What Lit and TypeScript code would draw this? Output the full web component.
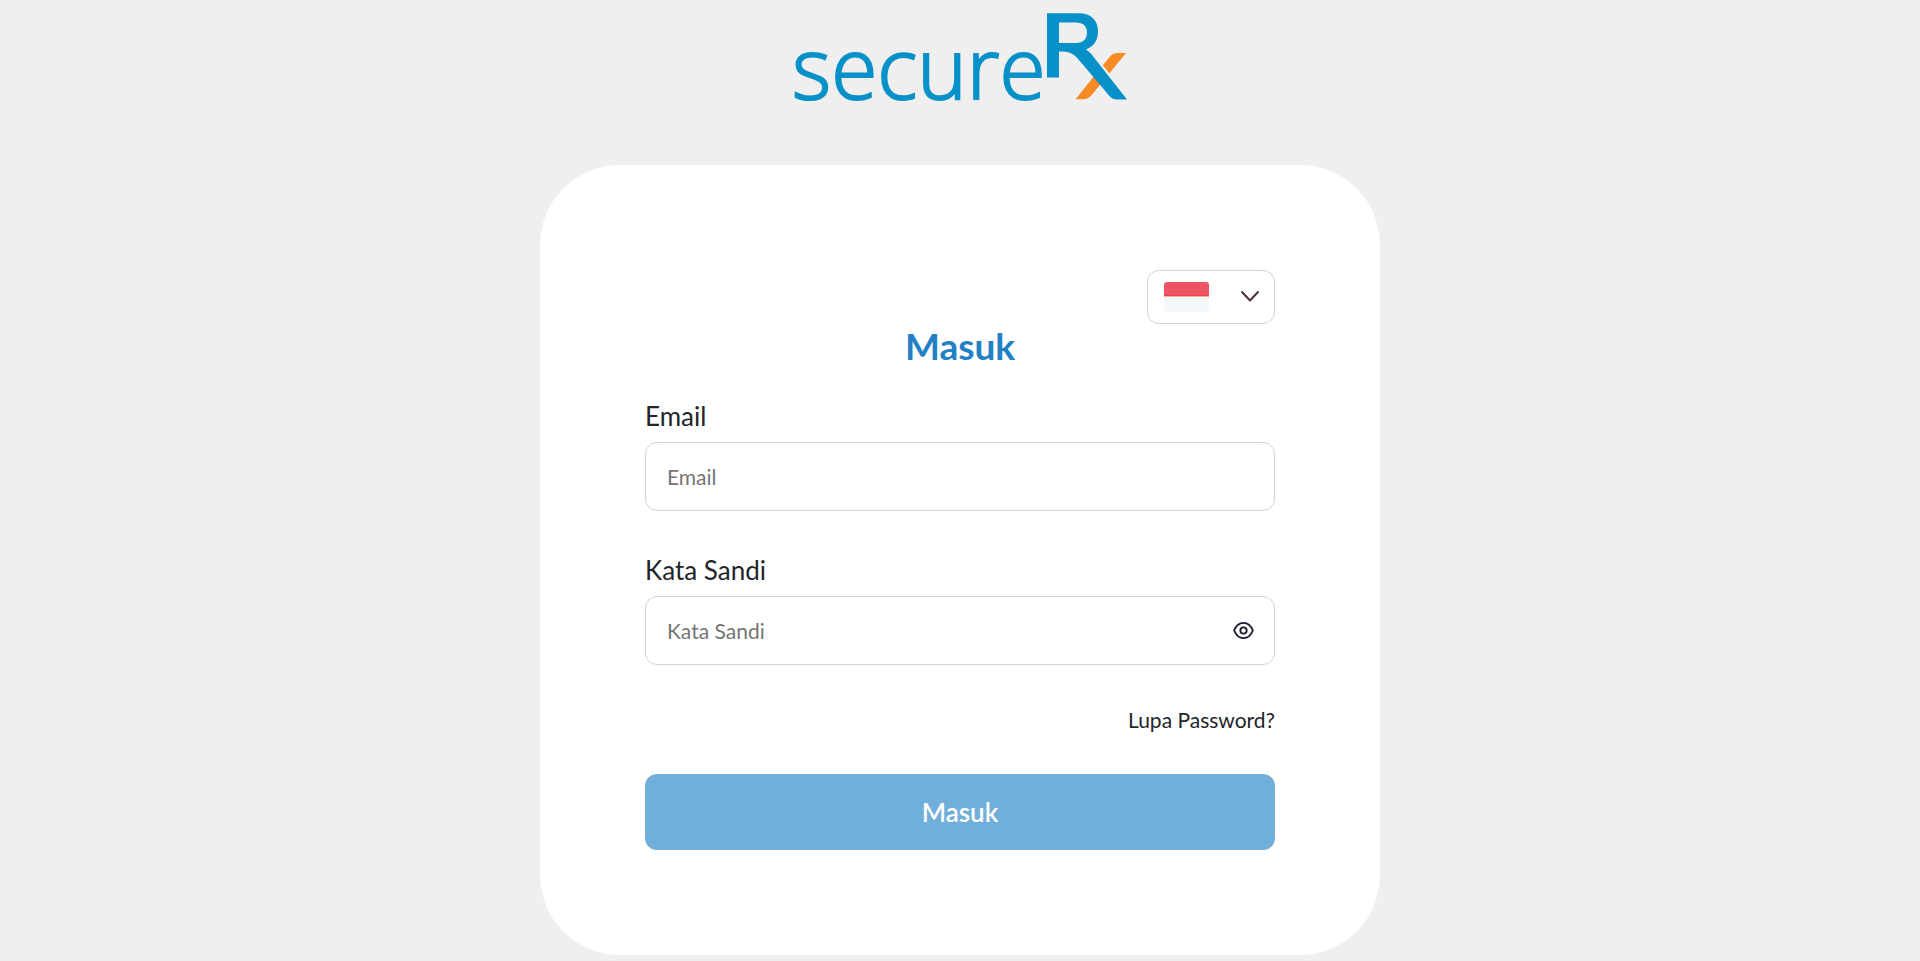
import { LitElement, html, css } from "lit";
import { customElement, state } from "lit/decorators.js";

@customElement("brand-logo")
class BrandLogo extends LitElement {
  static styles = css`
    :host {
      display: block;
    }
    .logo {
      display: block;
      width: 360px;
      max-width: 100%;
      height: auto;
    }
    .word {
      font-family: "Open Sans", "Noto Sans", sans-serif;
      font-size: 84px;
      font-weight: 300;
      fill: #0891c9;
      stroke: #0891c9;
      stroke-width: 2px;
    }
    .blue {
      fill: #0891c9;
    }
    .orange {
      fill: #f68b25;
    }
    .gap {
      fill: #efefef;
    }
  `;

  render() {
    return html`
      <svg class="logo" viewBox="0 0 360 130" role="img" aria-label="secureRx">
        <text class="word" x="12" y="99">secure</text>
        <path
          class="orange"
          d="M346 53h-8q-5 0-8.500 4L295.500 99.300H303q5 0 8.500-4z"
        />
        <path class="gap" d="M317 58l12.500 15.500-5 5-14-17z" />
        <path
          class="blue"
          fill-rule="evenodd"
          d="M267 13.300h32c12 0 19 7 19 18 0 9-4 15-12 18.200 3 2 5 4 8 8l33 42h-10q-5 0-8-4L299 60c-4-5-9-8.500-16-8.500h-4V77.500h-12zM279 22.500v20.500h17c7 0 11-4 11-10.500s-4-10-11-10z"
        />
      </svg>
    `;
  }
}

@customElement("app-root")
class AppRoot extends LitElement {
  static styles = css`
    :host {
      display: block;
      min-height: 100vh;
      background: #efefef;
      color: #212529;
      font-family: Lato, "Open Sans", sans-serif;
      font-size: 21px;
      line-height: 26px;
    }
    *,
    *::before,
    *::after {
      box-sizing: border-box;
    }
    .page {
      display: flex;
      flex-direction: column;
      align-items: center;
      gap: 35px;
      padding-bottom: 6px;
    }
    .card {
      display: flex;
      flex-direction: column;
      width: 100%;
      max-width: 840px;
      padding: 105px;
      border-radius: 80px;
      background: #ffffff;
    }
    .language {
      display: grid;
      align-self: flex-end;
      align-items: center;
      width: 128px;
      height: 54px;
    }
    .language > * {
      grid-area: 1 / 1;
    }
    .language select {
      width: 100%;
      height: 100%;
      border: 1px solid #ced4da;
      border-radius: 12px;
      background: #ffffff;
      color: transparent;
      font: inherit;
      appearance: none;
      cursor: pointer;
    }
    .language option {
      color: #212529;
    }
    .marks {
      display: flex;
      justify-content: space-between;
      align-items: center;
      padding: 0 16px 0 17px;
      pointer-events: none;
    }
    .flag {
      width: 45px;
      height: 30px;
    }
    .chevron {
      width: 18px;
      height: 18px;
    }
    h1 {
      margin: 0 0 31px;
      color: #2280c4;
      font-size: 37px;
      font-weight: 700;
      line-height: 44px;
      text-align: center;
    }
    form {
      display: flex;
      flex-direction: column;
    }
    .field {
      display: flex;
      flex-direction: column;
      gap: 9px;
      margin-bottom: 42px;
    }
    label {
      font-size: 26px;
      line-height: 34px;
    }
    .control {
      display: flex;
      align-items: center;
      height: 69px;
      padding: 0 20px 0 21px;
      border: 1px solid #ced4da;
      border-radius: 12px;
      background: #ffffff;
    }
    .control:focus-within {
      border-color: #2280c4;
    }
    .control input {
      flex: 1;
      min-width: 0;
      height: 100%;
      padding: 0;
      border: 0;
      outline: 0;
      background: transparent;
      color: inherit;
      font: inherit;
    }
    .control input::placeholder {
      color: #757575;
      opacity: 1;
    }
    .reveal {
      display: flex;
      padding: 0;
      border: 0;
      background: none;
      color: #1b1b33;
      cursor: pointer;
    }
    .reveal svg {
      width: 21px;
      height: 21px;
    }
    .forgot {
      align-self: flex-end;
      margin-bottom: 41px;
      color: #212529;
      text-decoration: none;
    }
    .submit {
      height: 76px;
      border: 0;
      border-radius: 12px;
      background: #71afdb;
      color: #ffffff;
      font: inherit;
      font-size: 26px;
      font-weight: 600;
    }
  `;

  @state() private showPassword = false;

  private togglePassword() {
    this.showPassword = !this.showPassword;
  }

  render() {
    return html`
      <div class="page">
        <brand-logo></brand-logo>
        <main class="card">
          <div class="language">
            <select aria-label="Bahasa">
              <option value="id">Indonesia</option>
              <option value="en">English</option>
            </select>
            <div class="marks" aria-hidden="true">
              <svg class="flag" viewBox="0 0 45 30">
                <path fill="#f4f8fa" d="M0 15h45v12q0 3-3 3H3q-3 0-3-3z" />
                <path fill="#ed5565" d="M0 15V3q0-3 3-3h39q3 0 3 3v12z" />
                <path fill="#ef3d55" d="M0 13h45v1H0z" />
                <path fill="#f3b394" d="M0 14h45v1H0z" />
              </svg>
              <svg class="chevron" viewBox="0 0 18 18">
                <path
                  d="M1 4l8 8.500L17 4"
                  fill="none"
                  stroke="#4b3038"
                  stroke-width="2"
                  stroke-linecap="round"
                  stroke-linejoin="round"
                />
              </svg>
            </div>
          </div>
          <h1>Masuk</h1>
          <form @submit=${(e: Event) => e.preventDefault()}>
            <div class="field">
              <label for="email">Email</label>
              <div class="control">
                <input id="email" type="email" placeholder="Email" />
              </div>
            </div>
            <div class="field">
              <label for="password">Kata Sandi</label>
              <div class="control">
                <input
                  id="password"
                  type=${this.showPassword ? "text" : "password"}
                  placeholder="Kata Sandi"
                />
                <button
                  class="reveal"
                  type="button"
                  aria-label="Tampilkan kata sandi"
                  aria-pressed=${this.showPassword}
                  @click=${this.togglePassword}
                >
                  <svg
                    viewBox="0 0 22 22"
                    fill="none"
                    stroke="currentColor"
                    stroke-width="2"
                    stroke-linejoin="round"
                  >
                    <path
                      d="M1.200 11C3.200 6 6.800 3 11 3s7.800 3 9.800 8c-2 5-5.600 8-9.800 8S3.200 16 1.200 11z"
                    />
                    <circle cx="11" cy="11" r="3.300" />
                  </svg>
                </button>
              </div>
            </div>
            <a class="forgot" href="#lupa-password">Lupa Password?</a>
            <button class="submit" type="submit" disabled>Masuk</button>
          </form>
        </main>
      </div>
    `;
  }
}
